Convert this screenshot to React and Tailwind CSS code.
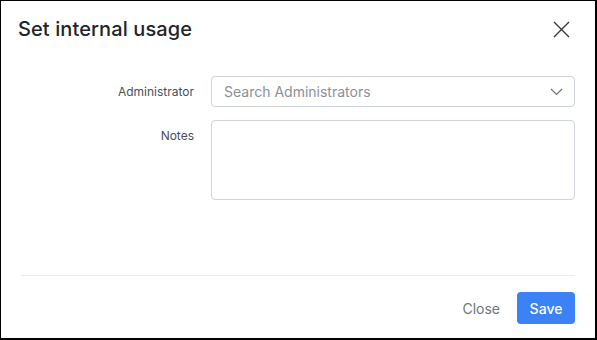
import React from 'react';

const App = () => {
  return (
    <div className="w-[597px] h-[340px] bg-white border-l border-t border-r-2 border-b-2 border-black flex flex-col font-['Inter',sans-serif]">
      {/* HEADER */}
      <div className="h-[56px] pl-[17px] pr-[25px] flex items-center justify-between">
        <h1 className="text-[20px] font-medium text-[#212529] tracking-[0.1px]">Set internal usage</h1>
        <button className="text-[#343a40]">
          <svg width="17" height="17" viewBox="0 0 17 17" fill="none" stroke="currentColor" strokeWidth="1.4">
            <path d="M1 1 L16 16 M16 1 L1 16" />
          </svg>
        </button>
      </div>

      {/* FORM */}
      <div className="mt-[19px] pl-[20px] pr-[20px] flex flex-col gap-[13px]">
        <div className="flex gap-[17px]">
          <label className="w-[173px] h-[31px] flex items-center justify-end text-[12px] text-[#495057]">Administrator</label>
          <div className="w-[364px] h-[31px] border border-[#ced4da] rounded-[4px] flex items-center justify-between pl-[12px] pr-[11px]">
            <span className="text-[14px] text-[#8a9099]">Search Administrators</span>
            <svg width="13" height="8" viewBox="0 0 13 8" fill="none" stroke="#6c757d" strokeWidth="1.2">
              <path d="M1 1 L6.5 6.5 L12 1" />
            </svg>
          </div>
        </div>
        <div className="flex gap-[17px]">
          <label className="w-[173px] h-[31px] flex items-center justify-end text-[12px] text-[#495057]">Notes</label>
          <textarea className="w-[364px] h-[80px] border border-[#ced4da] rounded-[4px] resize-none outline-none" />
        </div>
      </div>

      {/* FOOTER */}
      <div className="mt-auto px-[20px] pb-[14px]">
        <div className="border-t border-[#e9ecef]" />
        <div className="mt-[16px] flex items-center justify-end">
          <button className="text-[14px] text-[#6c757d] mr-[17px]">Close</button>
          <button className="w-[58px] h-[32px] rounded-[4px] bg-[#3b82f6] text-white text-[14px] font-medium">Save</button>
        </div>
      </div>
    </div>
  );
};

export default App;
